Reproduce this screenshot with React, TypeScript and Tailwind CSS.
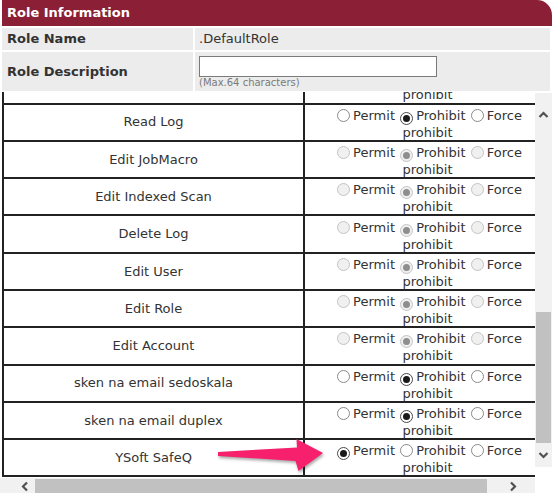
import React from "react";

type RowData = { name: string; checked: 0 | 1 | 2; disabled: boolean };

const rows: RowData[] = [
  { name: "Edit Log Settings", checked: 1, disabled: false },
  { name: "Read Log", checked: 1, disabled: false },
  { name: "Edit JobMacro", checked: 1, disabled: true },
  { name: "Edit Indexed Scan", checked: 1, disabled: true },
  { name: "Delete Log", checked: 1, disabled: true },
  { name: "Edit User", checked: 1, disabled: true },
  { name: "Edit Role", checked: 1, disabled: true },
  { name: "Edit Account", checked: 1, disabled: true },
  { name: "sken na email sedoskala", checked: 1, disabled: false },
  { name: "sken na email duplex", checked: 1, disabled: false },
  { name: "YSoft SafeQ", checked: 0, disabled: false },
];

function Radio({ on, disabled }: { on: boolean; disabled: boolean }) {
  const ring = disabled
    ? "border-[#c4c4c4] bg-[#f0f0f0]"
    : on
    ? "border-[#4a4a4a] bg-white"
    : "border-[#8a8a8a] bg-white";
  const dot = disabled ? "bg-[#8e8e8e]" : "bg-[#1a1a1a]";
  return (
    <span
      className={`inline-flex items-center justify-center w-[13px] h-[13px] rounded-full border align-[-2px] ml-[1px] mr-[3px] ${ring}`}
    >
      {on ? <span className={`w-[7px] h-[7px] rounded-full ${dot}`} /> : null}
    </span>
  );
}

function Chevron({ dir }: { dir: "up" | "down" | "left" | "right" }) {
  const pts =
    dir === "up"
      ? "1.5,7 5.5,3 9.5,7"
      : dir === "down"
      ? "1.5,3 5.5,7 9.5,3"
      : dir === "left"
      ? "7,1.5 3,5.5 7,9.5"
      : "3,1.5 7,5.5 3,9.5";
  return (
    <svg width="11" height="11" viewBox="0 0 11 11">
      <polyline points={pts} fill="none" stroke="#505050" strokeWidth="2.2" />
    </svg>
  );
}

export default function App() {
  return (
    <div className="relative w-[552px] h-[493px] overflow-hidden bg-white text-[13px] text-[#333] font-['DejaVu_Sans','Verdana',sans-serif]">
      {/* Role information table */}
      <div className="pl-[2px]">
        <div className="h-[26px] w-[550px] bg-[#8a1f35] rounded-tr-[15px] flex items-center pl-[5px] text-white font-bold">
          Role Information
        </div>
        <div className="mt-[2px] flex gap-[2px] h-[22px] w-[548px]">
          <div className="w-[191px] bg-[#ececec] font-bold flex items-center pl-[5px]">
            Role Name
          </div>
          <div className="flex-1 bg-[#ececec] flex items-center pl-[4px]">.DefaultRole</div>
        </div>
        <div className="mt-[2px] flex gap-[2px] h-[39px] w-[548px]">
          <div className="w-[191px] bg-[#ececec] font-bold flex items-center pl-[5px]">
            Role Description
          </div>
          <div className="flex-1 bg-[#ececec] pl-[4px] pt-[4px]">
            <div className="w-[238px] h-[21px] border border-[#7a7a7a] bg-white" />
            <div className="text-[10px] leading-[12px] text-[#7a7a7a]">(Max.64 characters)</div>
          </div>
        </div>
      </div>

      {/* Scroll area */}
      <div className="mt-[1px] flex">
        <div className="w-[535px]">
          <div className="h-[386px] overflow-hidden">
            <div className="-mt-[24.8px] ml-[2px] w-[555px] border-l-2 border-[#222]">
              {rows.map((r, i) => (
                <div key={i} className="flex h-[37.3px] border-b-2 border-[#222]">
                  <div className="w-[301px] border-r-2 border-[#222] flex items-center justify-center">
                    {r.name}
                  </div>
                  <div className="flex-1 pr-[4px] pt-[3px] flex flex-col justify-center text-center leading-[15px]">
                    <div className="whitespace-nowrap">
                      <Radio on={r.checked === 0} disabled={r.disabled} />
                      Permit{" "}
                      <Radio on={r.checked === 1} disabled={r.disabled} />
                      Prohibit{" "}
                      <Radio on={r.checked === 2} disabled={r.disabled} />
                      Force
                    </div>
                    <div className="pr-[3px]">prohibit</div>
                  </div>
                </div>
              ))}
            </div>
          </div>
          {/* horizontal scrollbar */}
          <div className="h-[17px] bg-[#f1f1f1] flex">
            <div className="w-[35px] flex items-center justify-center pl-[16px]">
              <Chevron dir="left" />
            </div>
            <div className="w-[452px] my-[1px] bg-[#c1c1c1]" />
            <div className="flex-1 flex items-center justify-center pl-[4px]">
              <Chevron dir="right" />
            </div>
          </div>
        </div>
        {/* vertical scrollbar */}
        <div className="w-[17px] mt-[1px] h-[374px] bg-[#f1f1f1] flex flex-col">
          <div className="h-[44px] flex items-center justify-center">
            <Chevron dir="up" />
          </div>
          <div className="h-[175px]" />
          <div className="h-[131px] mx-[1px] bg-[#c1c1c1]" />
          <div className="h-[24px] flex items-center justify-center">
            <Chevron dir="down" />
          </div>
        </div>
      </div>

      {/* Annotation arrow */}
      <svg
        className="absolute left-0 top-0 pointer-events-none"
        width="552"
        height="493"
        style={{ filter: "drop-shadow(1px 2px 1.5px rgba(0,0,0,0.35))" }}
      >
        <polygon
          points="218,452 297,447.5 296.5,439 323,453 298.5,471 295.5,461 218,456"
          fill="#f7206c"
        />
      </svg>
    </div>
  );
}
